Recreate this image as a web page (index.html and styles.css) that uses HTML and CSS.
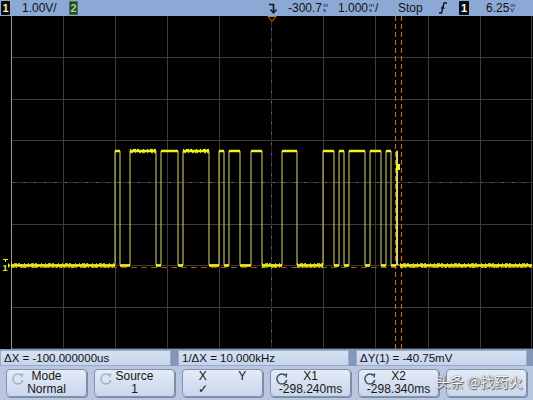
FILE: index.html
```html
<!DOCTYPE html>
<html>
<head>
<meta charset="utf-8">
<link rel="stylesheet" href="styles.css">
</head>
<body>
<div class="scope">
  <header class="topbar">
    <span class="ch ch1">1</span>
    <span class="item scale">1.00V/</span>
    <span class="ch ch2">2</span>
    <svg class="trig" width="10" height="14" viewBox="0 0 10 14"><path d="M1 3.5 H5.5 V11" fill="none" stroke="#111" stroke-width="1.6"/><path d="M2.5 8.5 L5.5 12 L8.5 8.5" fill="none" stroke="#111" stroke-width="1.4"/></svg>
    <span class="item delay">-300.7<span class="u">ms</span></span>
    <span class="item tb">1.000<span class="u">ms</span>/</span>
    <span class="item run">Stop</span>
    <svg class="slope" width="8" height="14" viewBox="0 0 8 14"><path d="M0 12 H2.6 L5 2 H8" fill="none" stroke="#111" stroke-width="1.3"/><path d="M2.2 7.6 L3.8 5.6 L5.4 7.6" fill="none" stroke="#111" stroke-width="1.1"/></svg>
    <span class="ch ch1b">1</span>
    <span class="item lvl">6.25<span class="u">mV</span></span>
  </header>

  <svg class="display" width="533" height="333" viewBox="0 16 533 333">
    <rect x="0" y="16" width="533" height="333" fill="#000"/>
    <g stroke="#3c3c3c" stroke-width="1">
      <path d="M63.5 16V349 M115.5 16V349 M167.5 16V349 M219.5 16V349 M323.5 16V349 M375.5 16V349 M428.5 16V349 M480.5 16V349 M531.5 16V349"/>
      <path d="M11 57.5H533 M11 99.5H533 M11 140.5H533 M11 224.5H533 M11 265.5H533 M11 307.5H533 M11 348.5H533"/>
    </g>
    <g stroke="#2c2c2c">
      <path d="M271.5 16V349 M11 182.5H533"/>
    </g>
    <g stroke="#6a6a6a" stroke-dasharray="2 8.4">
      <path d="M271.5 18V349 M13 182.5H533"/>
    </g>
    <path d="M11.5 16V349" stroke="#9a9a9a"/>
    <!-- Y cursor -->
    <path d="M11 267.5H533" stroke="#a0521c" stroke-dasharray="6 4"/>
    <!-- X cursors -->
    <path d="M395.5 16V349 M401.5 16V349" stroke="#c8641e" stroke-width="1.2" stroke-dasharray="5 3"/>
    <!-- trace edges -->
    <path d="M11 265 H115 V151 H120 V265 H130 V151 H156 V265 H161 V151 H178 V265 H183 V151 H209 V265 H219 V151 H224 V265 H229 V151 H240 V265 H251 V151 H262 V265 H282 V151 H297 V265 H323 V151 H334 V265 H339 V151 H344 V265 H349 V151 H365 V265 H370 V151 H381 V265 H386 V151 H391 V265 H396.5 V151 H397.5 V265 H532" fill="none" stroke="#d9d96a" stroke-width="1"/>
    <!-- trace levels -->
    <path d="M11 265.5H115 M115 151H120 M120 265.5H130 M130 151H156 M156 265.5H161 M161 151H178 M178 265.5H183 M183 151H209 M209 265.5H219 M219 151H224 M224 265.5H229 M229 151H240 M240 265.5H251 M251 151H262 M262 265.5H282 M282 151H297 M297 265.5H323 M323 151H334 M334 265.5H339 M339 151H344 M344 265.5H349 M349 151H365 M365 265.5H370 M370 151H381 M381 265.5H386 M386 151H391 M391 265.5H396 M400 265.5H532" fill="none" stroke="#f2f21c" stroke-width="2.6"/>
    <path d="M11 263.8H115 M130 149.4H156 M183 149.4H209 M262 263.8H282 M297 263.8H323 M400 263.8H532" fill="none" stroke="#ffff3a" stroke-width="1" stroke-dasharray="1 2 3 1 2 4 1 3"/>
    <path d="M11 267.2H115 M130 152.7H156 M183 152.7H209 M262 267.2H282 M297 267.2H323 M400 267.2H532" fill="none" stroke="#e8e81a" stroke-width="1" stroke-dasharray="3 2 1 3 2 1"/>
    <rect x="396" y="164" width="4" height="6" fill="#f4f42a"/>
    <!-- trigger position marker -->
    <path d="M268 16.5 H276 L272 21.5 Z" fill="#000" stroke="#c9822e" stroke-width="1"/>
    <!-- ground marker -->
    <text x="2.5" y="271" class="gnd">1</text>
    <path d="M3 259.5H8 M5.5 259.5V262" stroke="#e8e83a" stroke-width="1"/>
    <path d="M8 263 L10.5 265.5 L8 268 Z" fill="#e8e83a"/>
  </svg>

  <div class="readouts">
    <div class="ro ro1">ΔX = -100.000000us</div>
    <div class="ro ro2">1/ΔX = 10.000kHz</div>
    <div class="ro ro3">ΔY(1) = -40.75mV</div>
  </div>

  <div class="softkeys">
    <div class="key">
      <svg class="knob faint" width="14" height="14" viewBox="0 0 14 14"><path d="M10.5 3.5 A5 5 0 1 0 11.8 8" fill="none" stroke="currentColor" stroke-width="1.6"/><path d="M8.2 2.6 L11.6 2.2 L11 5.6" fill="none" stroke="currentColor" stroke-width="1.4"/></svg>
      <span>Mode</span><span>Normal</span>
    </div>
    <div class="key">
      <svg class="knob faint" width="14" height="14" viewBox="0 0 14 14"><path d="M10.5 3.5 A5 5 0 1 0 11.8 8" fill="none" stroke="currentColor" stroke-width="1.6"/><path d="M8.2 2.6 L11.6 2.2 L11 5.6" fill="none" stroke="currentColor" stroke-width="1.4"/></svg>
      <span>Source</span><span>1</span>
    </div>
    <div class="key xy">
      <span>X</span><span>Y</span><span>✓</span><span></span>
    </div>
    <div class="key">
      <svg class="knob" width="14" height="14" viewBox="0 0 14 14"><path d="M10.5 3.5 A5 5 0 1 0 11.8 8" fill="none" stroke="currentColor" stroke-width="1.5"/><path d="M8.2 2.6 L11.6 2.2 L11 5.6" fill="none" stroke="currentColor" stroke-width="1.3"/></svg>
      <span>X1</span><span>-298.240ms</span>
    </div>
    <div class="key">
      <svg class="knob" width="14" height="14" viewBox="0 0 14 14"><path d="M10.5 3.5 A5 5 0 1 0 11.8 8" fill="none" stroke="currentColor" stroke-width="1.5"/><path d="M8.2 2.6 L11.6 2.2 L11 5.6" fill="none" stroke="currentColor" stroke-width="1.3"/></svg>
      <span>X2</span><span>-298.340ms</span>
    </div>
    <div class="key blank"></div>
    <span class="watermark">头条 @找药火</span>
  </div>
</div>
</body>
</html>
```

FILE: styles.css
```css
html, body {
  margin: 0;
  padding: 0;
  background: #000;
}

.scope {
  width: 533px;
  height: 400px;
  overflow: hidden;
  font-family: "Liberation Sans", Arial, sans-serif;
  position: relative;
}

/* ---------- top status bar ---------- */
.topbar {
  height: 16px;
  background: #8ca9d6;
  display: flex;
  align-items: center;
  color: #121212;
  font-size: 12px;
  line-height: 16px;
}

.item {
  display: inline-flex;
  align-items: center;
  flex: none;
  white-space: nowrap;
}

.ch {
  display: inline-block;
  flex: none;
  width: 9px;
  height: 14px;
  line-height: 14px;
  text-align: center;
  font-weight: bold;
  font-size: 11px;
  border-radius: 1px;
}
.ch1 { margin-left: 1px; background: #0a0a0a; color: #f2f0b0; }
.ch2 { margin-left: 7px; background: #23452a; color: #8fe08f; box-shadow: inset 0 0 0 1px #4f6f55; }
.ch1b { margin-left: 12px; width: 10px; background: #0a0a0a; color: #fff; }

.scale { margin-left: 12px; width: 40px; }
.trig  { margin-left: 190px; flex: none; }
.delay { margin-left: 10px; width: 42px; }
.tb    { margin-left: 8px; width: 44px; }
.run   { margin-left: 16px; width: 26px; }
.slope { margin-left: 15px; flex: none; }
.lvl   { margin-left: 17px; width: 42px; }

.u {
  display: flex;
  flex-direction: column;
  align-items: center;
  width: 6px;
  margin-left: 1px;
  font-size: 6px;
  line-height: 5px;
  white-space: normal;
  word-break: break-all;
}

/* ---------- display ---------- */
.display {
  display: block;
}
.gnd {
  font-family: "Liberation Sans", Arial, sans-serif;
  font-size: 9px;
  font-weight: bold;
  fill: #e8e83a;
}

/* ---------- readouts ---------- */
.readouts {
  height: 17px;
  box-sizing: border-box;
  padding: 1px 6px 0 0;
  display: flex;
  gap: 7px;
  background: #8497bb;
}
.ro {
  flex: 1;
  background: linear-gradient(#d6e1f2, #c5d4ec);
  border: 1px solid #9aabc9;
  box-sizing: border-box;
  height: 16px;
  font-size: 11.5px;
  line-height: 14px;
  color: #121212;
  padding-left: 3px;
  white-space: nowrap;
}

/* ---------- softkeys ---------- */
.softkeys {
  height: 34px;
  box-sizing: border-box;
  background: #b8c7df;
  display: flex;
  gap: 7px;
  padding: 3px 0 0 6px;
  position: relative;
}
.key {
  width: 81px;
  height: 28px;
  box-sizing: border-box;
  border: 1px solid #8192ad;
  border-radius: 4px;
  background: linear-gradient(#e4ebf7, #c9d6ec);
  box-shadow: 1px 1px 0 #7d8ba3;
  display: flex;
  flex-direction: column;
  align-items: center;
  justify-content: center;
  font-size: 12px;
  line-height: 13px;
  color: #161616;
  position: relative;
}
.key.xy {
  display: grid;
  grid-template-columns: 1fr 1fr;
  justify-items: center;
  align-content: center;
}
.knob {
  position: absolute;
  left: 4px;
  top: 2px;
  color: #3d4c68;
}
.knob.faint { color: #a7b3c7; }

.watermark {
  position: absolute;
  left: 436px;
  top: 6px;
  font-family: "Noto Sans CJK SC", sans-serif;
  font-size: 14px;
  line-height: 18px;
  color: #f7f7f7;
  text-shadow: 0 0 1px #3a3a3a, 1px 1px 1px #555;
  white-space: nowrap;
}
```
